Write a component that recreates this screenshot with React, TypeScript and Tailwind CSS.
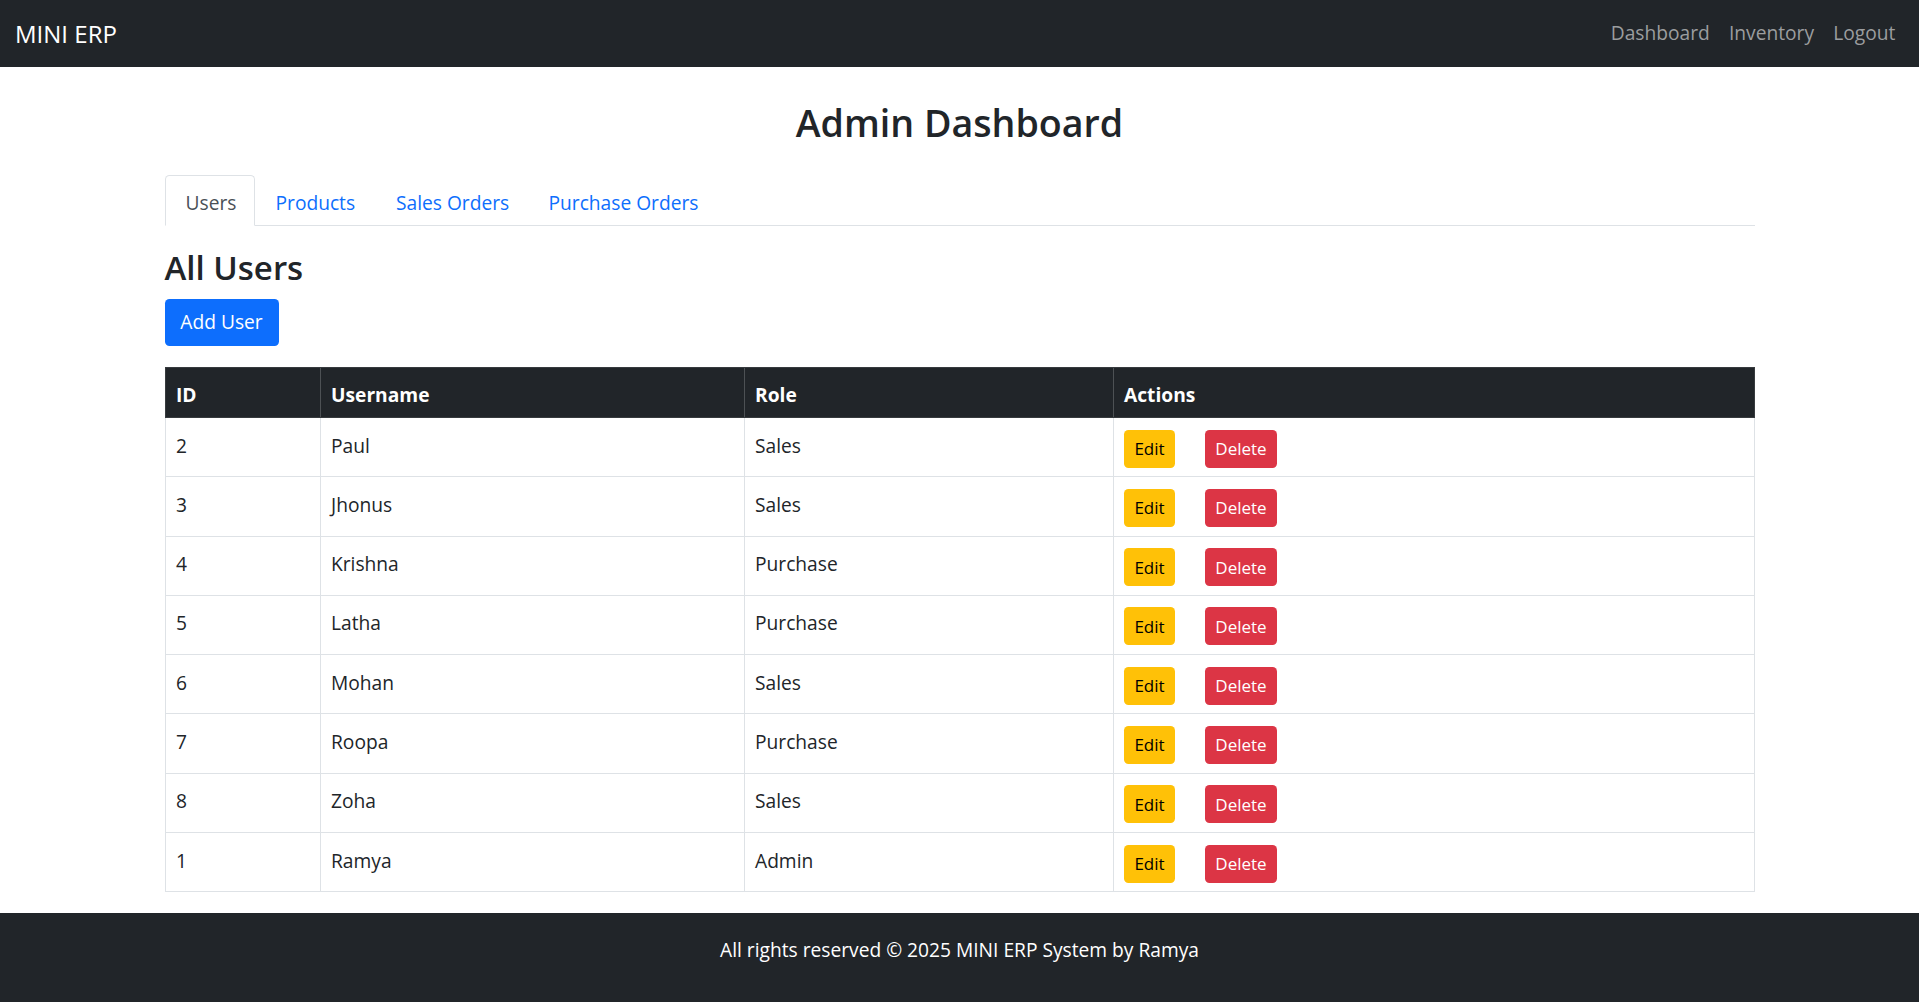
import React from "react";

const users = [
  { id: 2, name: "Paul", role: "Sales" },
  { id: 3, name: "Jhonus", role: "Sales" },
  { id: 4, name: "Krishna", role: "Purchase" },
  { id: 5, name: "Latha", role: "Purchase" },
  { id: 6, name: "Mohan", role: "Sales" },
  { id: 7, name: "Roopa", role: "Purchase" },
  { id: 8, name: "Zoha", role: "Sales" },
  { id: 1, name: "Ramya", role: "Admin" },
];

export default function App() {
  return (
    <div className="min-h-[1002px] bg-white font-['Open_Sans','Noto_Sans',sans-serif] text-[#212529] text-[19.2px] leading-[28.8px]">
      {/* Navbar */}
      <nav className="h-[67px] bg-[#212529] flex items-center justify-between pl-[15px] pr-[14px]">
        <span className="text-white text-[24px] leading-[36px]">MINI ERP</span>
        <div className="flex items-center">
          <a className="px-[9.6px] text-[#9b9d9f]">Dashboard</a>
          <a className="px-[9.6px] text-[#9b9d9f]">Inventory</a>
          <a className="px-[9.6px] text-[#9b9d9f]">Logout</a>
        </div>
      </nav>

      <main className="w-[1590px] mx-auto">
        <h2 className="mt-[32.5px] text-center text-[37.6px] leading-[46px] font-semibold">Admin Dashboard</h2>

        {/* Tabs */}
        <div className="mt-[29.5px] flex border-b border-[#dee2e6] h-[51px]">
          <div className="w-[90px] h-[51px] -mb-px border border-[#dee2e6] border-b-white rounded-t-[4.5px] bg-white text-[#495057] pl-[20px] pt-[12.5px]">
            Users
          </div>
          <div className="w-[120.5px] pl-[21px] pt-[13.5px] text-[#0d6efd]">Products</div>
          <div className="w-[152.5px] pl-[21px] pt-[13.5px] text-[#0d6efd]">Sales Orders</div>
          <div className="pl-[21px] pt-[13.5px] text-[#0d6efd]">Purchase Orders</div>
        </div>

        <h3 className="mt-[22px] text-[33px] leading-[40px] font-semibold">All Users</h3>
        <button className="mt-[11px] w-[114px] h-[47px] rounded-[4.5px] bg-[#0d6efd] text-white text-[19.2px] flex items-center justify-center">
          Add User
        </button>

        {/* Table */}
        <div className="mt-[21px] mb-[21px]">
          <div className="grid grid-cols-[155px_424px_369px_1fr] h-[51px] bg-[#212529] text-white font-bold border border-[#373b3e]">
            <div className="border-r border-[#4d5154] pl-[10.5px] pt-[12.5px]">ID</div>
            <div className="border-r border-[#4d5154] pl-[10.5px] pt-[12.5px]">Username</div>
            <div className="border-r border-[#4d5154] pl-[10.5px] pt-[12.5px]">Role</div>
            <div className="pl-[10.5px] pt-[12.5px]">Actions</div>
          </div>
          {users.map((u) => (
            <div
              key={u.id}
              className="grid grid-cols-[155px_424px_369px_1fr] h-[59.3px] border-x border-b border-[#dee2e6]"
            >
              <div className="border-r border-[#dee2e6] pl-[10.5px] pt-[13.5px]">{u.id}</div>
              <div className="border-r border-[#dee2e6] pl-[10.5px] pt-[13.5px]">{u.name}</div>
              <div className="border-r border-[#dee2e6] pl-[10.5px] pt-[13.5px]">{u.role}</div>
              <div className="flex items-start gap-[30px] pl-[10.5px] pt-[11.5px]">
                <button className="w-[51px] h-[38px] rounded-[4.5px] bg-[#ffc107] text-black text-[17px] leading-[25px] flex items-center justify-center">
                  Edit
                </button>
                <button className="w-[72px] h-[38px] rounded-[4.5px] bg-[#dc3545] text-white text-[17px] leading-[25px] flex items-center justify-center">
                  Delete
                </button>
              </div>
            </div>
          ))}
        </div>
      </main>

      <footer className="h-[90px] bg-[#212529] text-white text-center pt-[23px]">
        All rights reserved © 2025 MINI ERP System by Ramya
      </footer>
    </div>
  );
}
